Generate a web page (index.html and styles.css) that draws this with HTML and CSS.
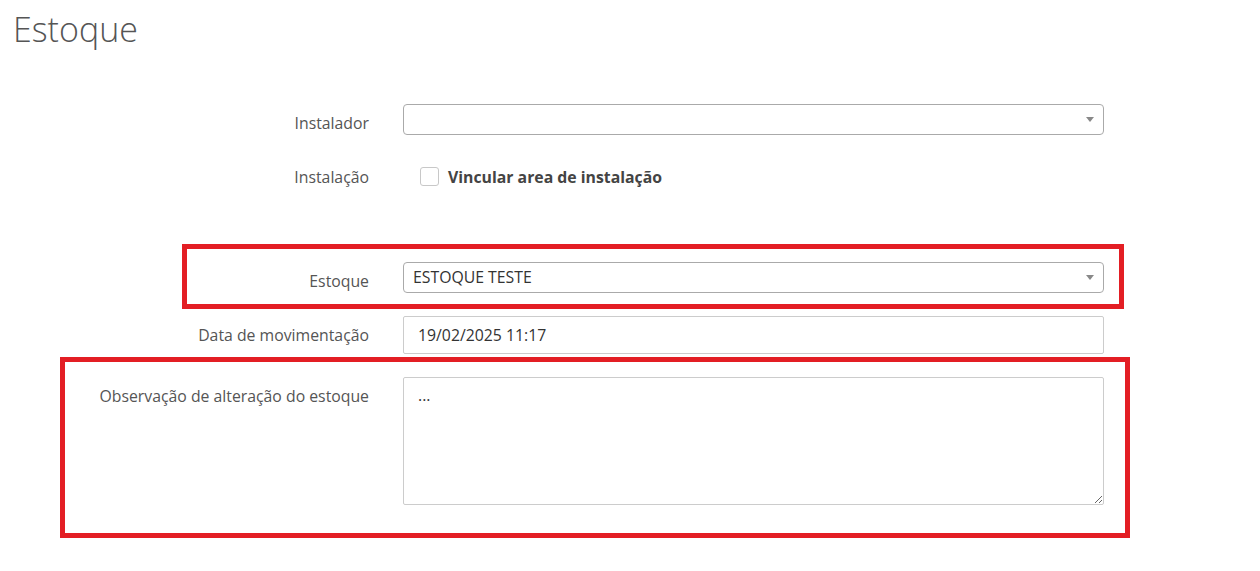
FILE: index.html
```html
<!DOCTYPE html>
<html lang="pt">
<head>
<meta charset="utf-8">
<title>Estoque</title>
<link rel="stylesheet" href="styles.css">
</head>
<body>
<div class="page">
  <h1 class="title">Estoque</h1>
  <form class="form">
    <div class="row row-first">
      <label class="label">Instalador</label>
      <div class="field">
        <div class="select"><span class="select-text"></span><span class="arrow"></span></div>
      </div>
    </div>
    <div class="row row-check">
      <label class="label label-check">Instalação</label>
      <div class="field check-field">
        <span class="checkbox"></span>
        <span class="check-text">Vincular area de instalação</span>
      </div>
    </div>
    <div class="row row-stock">
      <label class="label">Estoque</label>
      <div class="field">
        <div class="select"><span class="select-text">ESTOQUE TESTE</span><span class="arrow"></span></div>
      </div>
    </div>
    <div class="row row-gap">
      <label class="label">Data de movimentação</label>
      <div class="field">
        <div class="input">19/02/2025 11:17</div>
      </div>
    </div>
    <div class="row row-gap">
      <label class="label">Observação de alteração do estoque</label>
      <div class="field">
        <textarea class="textarea">...</textarea>
      </div>
    </div>
  </form>
  <div class="mark mark-stock"></div>
  <div class="mark mark-obs"></div>
</div>
</body>
</html>
```

FILE: styles.css
```css
html, body {
  margin: 0;
  padding: 0;
  background: #ffffff;
}

body {
  font-family: "Open Sans", "Liberation Sans", sans-serif;
  color: #555555;
  font-size: 15.8px;
}

.page {
  position: relative;
  width: 1260px;
  height: 571px;
  overflow: hidden;
}

.title {
  margin: 0;
  padding: 9px 0 0 13px;
  font-size: 34px;
  font-weight: 300;
  line-height: 40px;
  color: #555555;
}

.form {
  margin-top: 55px;
  display: flex;
  flex-direction: column;
}

.row {
  display: grid;
  grid-template-columns: 369px 701px;
  column-gap: 34px;
  align-items: start;
}

.row-check {
  margin-top: 26px;
  height: 31px;
}

.row-stock {
  margin-top: 70px;
}

.row-gap {
  margin-top: 23px;
}

.label {
  text-align: right;
  padding-top: 9px;
  line-height: 20px;
  color: #555555;
}

.label-check {
  padding-top: 6px;
}

.field {
  min-width: 0;
}

.select {
  box-sizing: border-box;
  height: 31px;
  border: 1px solid #aaaaaa;
  border-radius: 4px;
  display: flex;
  align-items: center;
  justify-content: space-between;
  padding: 0 9px 0 9px;
  color: #333333;
  line-height: 29px;
}

.arrow {
  width: 0;
  height: 0;
  border-left: 4px solid transparent;
  border-right: 4px solid transparent;
  border-top: 5px solid #888888;
}

.check-field {
  display: flex;
  align-items: center;
  height: 31px;
  padding-left: 17px;
  gap: 9px;
}

.checkbox {
  box-sizing: border-box;
  width: 19px;
  height: 19px;
  border: 1px solid #c8c8c8;
  border-radius: 3px;
  background: #ffffff;
}

.check-text {
  font-weight: 700;
  color: #444444;
  line-height: 20px;
  padding-top: 1px;
}

.input {
  box-sizing: border-box;
  height: 38px;
  border: 1px solid #cccccc;
  border-radius: 2px;
  padding: 0 14px;
  line-height: 36px;
  color: #333333;
}

.textarea {
  display: block;
  box-sizing: border-box;
  width: 701px;
  height: 128px;
  margin: 0;
  border: 1px solid #cccccc;
  border-radius: 2px;
  padding: 6px 14px;
  font-family: "Open Sans", "Liberation Sans", sans-serif;
  font-size: 15.8px;
  line-height: 22px;
  color: #333333;
  resize: vertical;
  outline: none;
}

.mark {
  position: absolute;
  box-sizing: border-box;
  border: 5px solid #e31e24;
}

.mark-stock {
  left: 182px;
  top: 244px;
  width: 942px;
  height: 65px;
}

.mark-obs {
  left: 60px;
  top: 357px;
  width: 1070px;
  height: 181px;
}
```
